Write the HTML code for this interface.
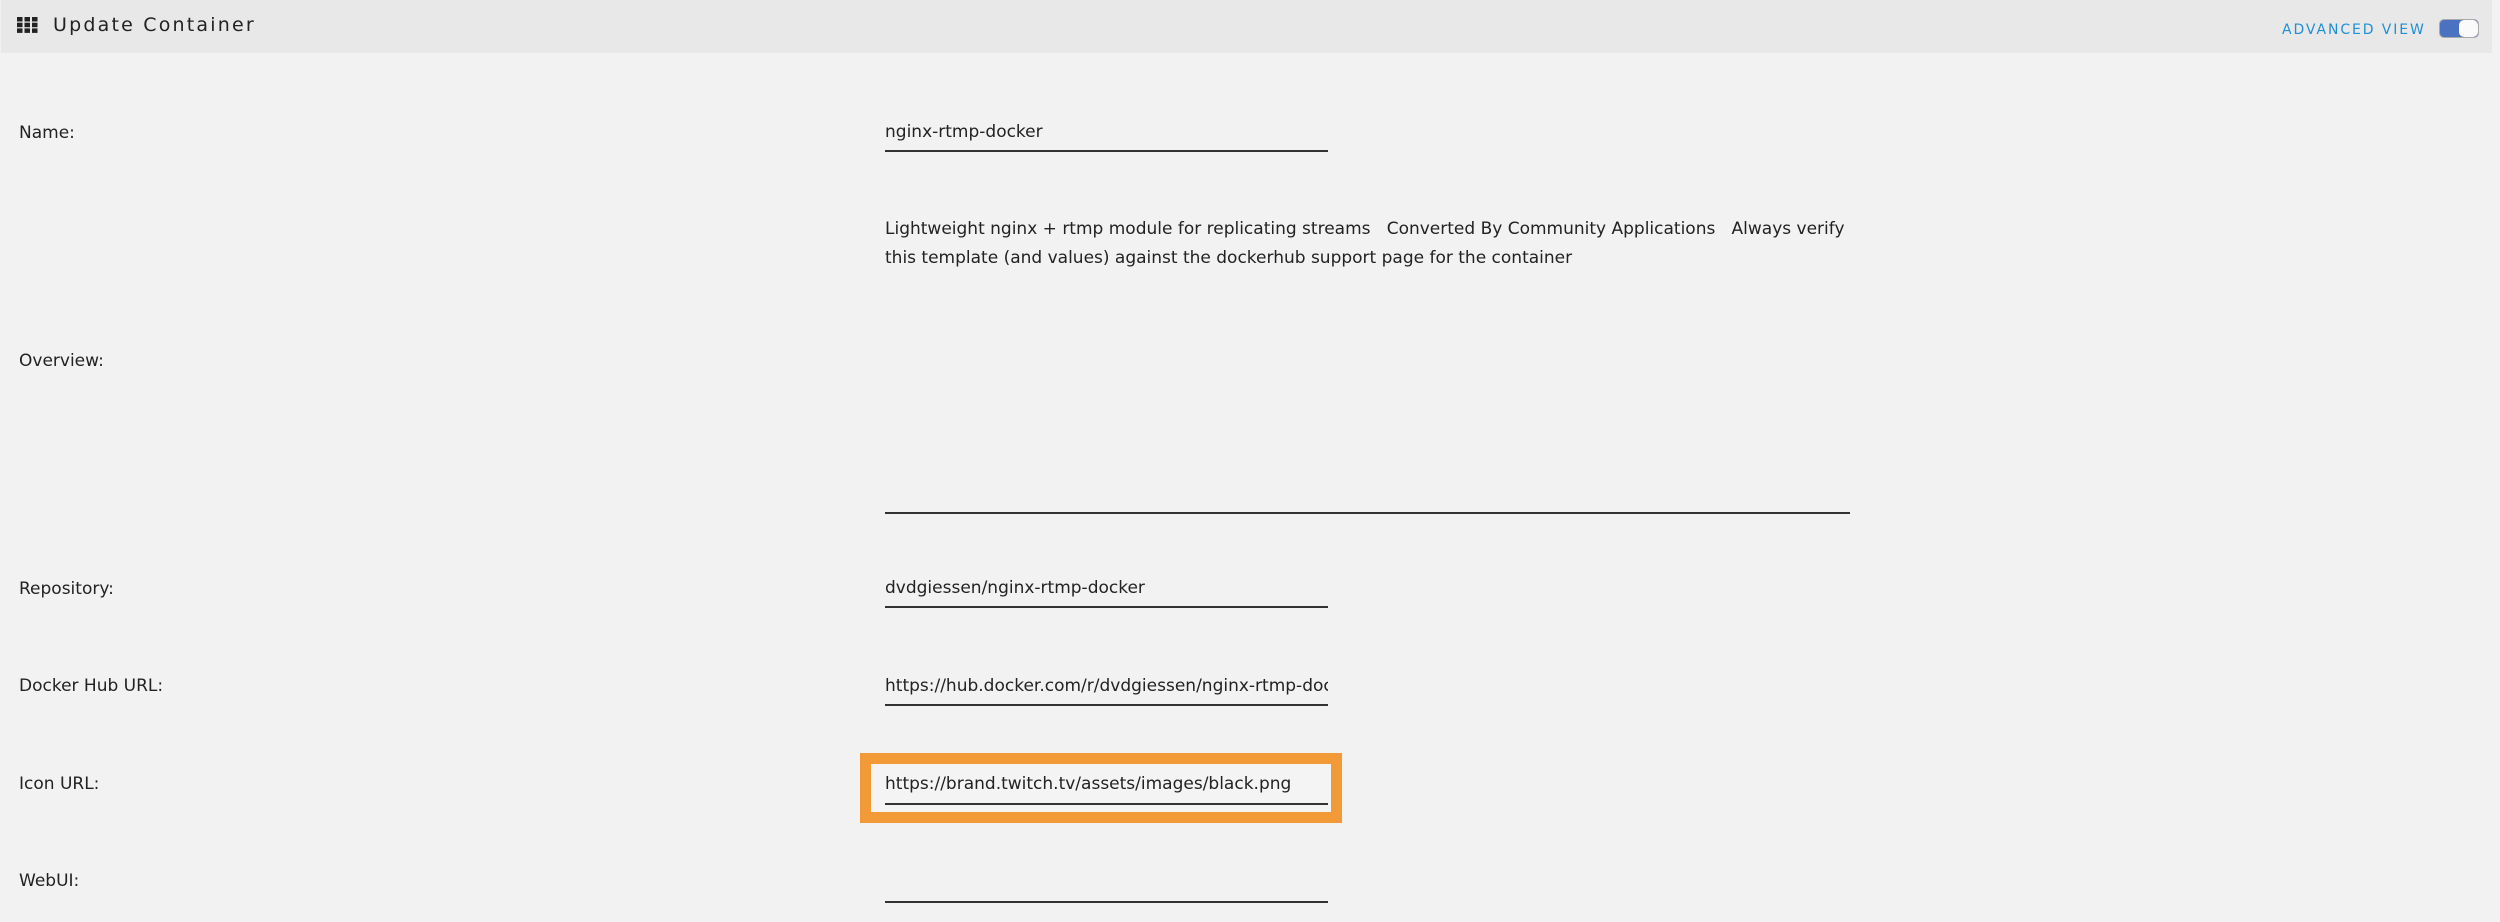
<!DOCTYPE html>
<html><head><meta charset="utf-8"><style>
body{margin:0;width:2500px;height:922px;background:#f2f2f2;font-family:"DejaVu Sans","Liberation Sans",sans-serif;color:#222;position:relative;overflow:hidden}
.hdr{position:absolute;left:1px;top:0;width:2491px;height:53px;background:#e8e8e8}
.title{position:absolute;left:52px;top:14px;font-size:19px;letter-spacing:2.2px;color:#222}
.grid{position:absolute;left:16px;top:17px;width:21px;height:16px}
.adv{position:absolute;left:2281px;top:22px;font-size:14px;letter-spacing:1.9px;color:#1f8fd6}
.tog{position:absolute;left:2438px;top:19px;width:38px;height:17px;border-radius:5px;background:#4a72c0;border:1px solid #aaa}
.tog i{position:absolute;right:0;top:0;width:19px;height:17px;background:#fafafa;border-radius:5px}
.l{position:absolute;left:19px;font-size:17px;transform:translateY(-50%)}
.v{position:absolute;left:885px;font-size:17px;transform:translateY(-50%);white-space:nowrap;overflow:hidden}
.u{position:absolute;left:885px;width:443px;height:2px;background:#333}
</style></head><body>
<div class="hdr">
<svg class="grid" viewBox="0 0 21 16"><g fill="#222"><rect x="0" y="0" width="5.5" height="4.5"/><rect x="7.5" y="0" width="5.5" height="4.5"/><rect x="15" y="0" width="5.5" height="4.5"/><rect x="0" y="5.7" width="5.5" height="4.5"/><rect x="7.5" y="5.7" width="5.5" height="4.5"/><rect x="15" y="5.7" width="5.5" height="4.5"/><rect x="0" y="11.4" width="5.5" height="4.5"/><rect x="7.5" y="11.4" width="5.5" height="4.5"/><rect x="15" y="11.4" width="5.5" height="4.5"/></g></svg>
<div class="title">Update Container</div>
<div class="adv">ADVANCED VIEW</div>
<div class="tog"><i></i></div>
</div>

<div class="l" style="top:133px">Name:</div>
<div class="v" style="top:132px">nginx-rtmp-docker</div>
<div class="u" style="top:150px"></div>

<div class="v" style="transform:none;top:215px;line-height:29px;white-space:normal;width:1000px">Lightweight nginx + rtmp module for replicating streams &nbsp;&nbsp;Converted By Community Applications &nbsp;&nbsp;Always verify<br>this template (and values) against the dockerhub support page for the container</div>
<div class="l" style="top:361px">Overview:</div>
<div class="u" style="top:512px;width:965px"></div>

<div class="l" style="top:589px">Repository:</div>
<div class="v" style="top:588px">dvdgiessen/nginx-rtmp-docker</div>
<div class="u" style="top:606px"></div>

<div class="l" style="top:686px">Docker Hub URL:</div>
<div class="v" style="top:686px;width:443px">https://hub.docker.com/r/dvdgiessen/nginx-rtmp-docker</div>
<div class="u" style="top:704px"></div>

<div style="position:absolute;left:860px;top:753px;width:460px;height:48px;border:11px solid #f29a38;background:#f4f4f4"></div>
<div class="l" style="top:784px">Icon URL:</div>
<div class="v" style="top:784px">https://brand.twitch.tv/assets/images/black.png</div>
<div class="u" style="top:803px"></div>

<div class="l" style="top:881px">WebUI:</div>
<div class="u" style="top:901px"></div>
</body></html>
